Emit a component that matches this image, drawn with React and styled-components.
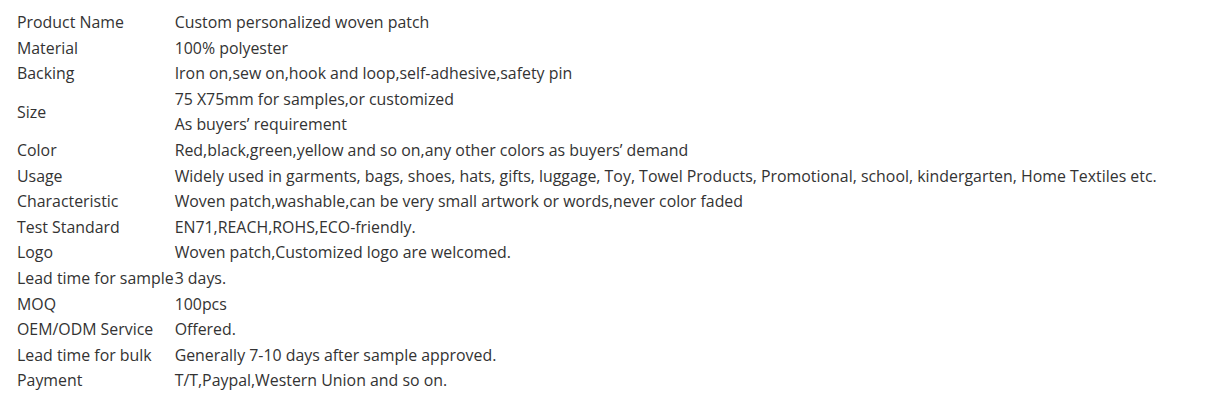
import React from "react";
import styled, { createGlobalStyle } from "styled-components";

const Global = createGlobalStyle`
  html, body { margin: 0; padding: 0; background: #fff; }
  body { font-family: "Open Sans", "Liberation Sans", sans-serif; color: #333; }
`;

const Wrap = styled.div`
  padding: 10px 0 0 17px;
`;

const Table = styled.table`
  border-collapse: collapse;
  border-spacing: 0;
  font-size: 15.9px;
`;

const Label = styled.td`
  padding: 0;
  line-height: 25.6px;
  vertical-align: middle;
  white-space: nowrap;
`;

const Value = styled.td`
  padding: 0 0 0 1px;
  line-height: 25.6px;
  vertical-align: middle;
`;

const rows = [
  ["Product Name", ["Custom personalized woven patch"]],
  ["Material", ["100% polyester"]],
  ["Backing", ["Iron on,sew on,hook and loop,self-adhesive,safety pin"]],
  ["Size", ["75 X75mm for samples,or customized", "As buyers\u2019 requirement"]],
  ["Color", ["Red,black,green,yellow and so on,any other colors as buyers\u2019 demand"]],
  ["Usage", ["Widely used in garments, bags, shoes, hats, gifts, luggage, Toy, Towel Products, Promotional, school, kindergarten, Home Textiles etc."]],
  ["Characteristic", ["Woven patch,washable,can be very small artwork or words,never color faded"]],
  ["Test Standard", ["EN71,REACH,ROHS,ECO-friendly."]],
  ["Logo", ["Woven patch,Customized logo are welcomed."]],
  ["Lead time for sample", ["3 days."]],
  ["MOQ", ["100pcs"]],
  ["OEM/ODM Service", ["Offered."]],
  ["Lead time for bulk", ["Generally 7-10 days after sample approved."]],
  ["Payment", ["T/T,Paypal,Western Union and so on."]],
];

const Line = styled.div``;

export default function App() {
  return (
    <>
      <Global />
      <Wrap>
        <Table>
          <tbody>
            {rows.map(([k, v]) => (
              <tr key={k}>
                <Label>{k}</Label>
                <Value>
                  {v.map((t, i) => (
                    <Line key={i}>{t}</Line>
                  ))}
                </Value>
              </tr>
            ))}
          </tbody>
        </Table>
      </Wrap>
    </>
  );
}
